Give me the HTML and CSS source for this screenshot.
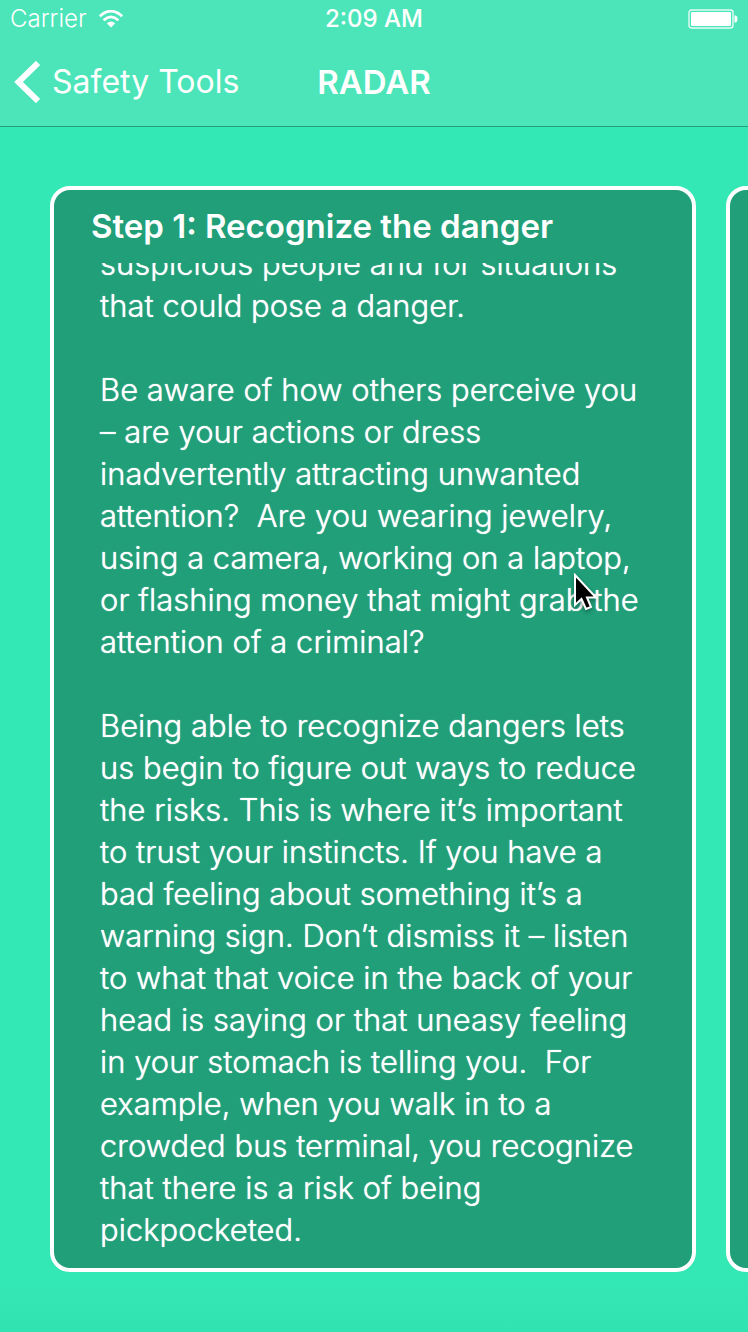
FILE: index.html
```html
<!DOCTYPE html>
<html lang="en">
<head>
<meta charset="utf-8">
<meta name="viewport" content="width=device-width, initial-scale=1">
<title>RADAR</title>
<link rel="stylesheet" href="styles.css">
</head>
<body>
<div class="app">
  <header class="top">
    <div class="status">
      <div class="carrier">
        <span>Carrier</span>
        <svg class="wifi" viewBox="0 0 26 18" aria-hidden="true">
          <path d="M1.8 6.2Q13-4 24.2 6.2" fill="none" stroke="#fff" stroke-width="2.8"/>
          <path d="M5.6 10.2Q13 3.6 20.4 10.2" fill="none" stroke="#fff" stroke-width="2.8"/>
          <path d="M8.8 13.3Q13 9.6 17.2 13.3L13 17.6Z" fill="#fff"/>
        </svg>
      </div>
      <time class="clock">2:09 AM</time>
      <svg class="battery" viewBox="0 0 50 20" aria-label="Battery full">
        <rect x="1" y="1" width="44" height="18" rx="2.5" fill="none" stroke="#fff" stroke-opacity=".85" stroke-width="1.4"/>
        <rect x="3" y="3" width="40" height="14" rx="1" fill="#fff"/>
        <path d="M46.5 6.5h1.5q1.5.5 1.5 3.500t-1.500 3.500h-1.500z" fill="#fff"/>
      </svg>
    </div>
    <nav class="nav">
      <a class="back" href="#">
        <svg class="chevron" viewBox="0 0 26 42" aria-hidden="true">
          <path d="M24 2L4.500 21l19.500 19" fill="none" stroke="#fff" stroke-width="6"/>
        </svg>
        <span>Safety Tools</span>
      </a>
      <h1 class="title">RADAR</h1>
    </nav>
  </header>
  <main class="pager">
    <article class="card">
      <h2 class="step">Step 1: Recognize the danger</h2>
      <div class="scroll">
        <p>suspicious people and for situations
that could pose a danger.</p>
        <p>Be aware of how others perceive you
– are your actions or dress
inadvertently attracting unwanted
attention?  Are you wearing jewelry,
using a camera, working on a laptop,
or flashing money that might grab the
attention of a criminal?</p>
        <p>Being able to recognize dangers lets
us begin to figure out ways to reduce
the risks. This is where it’s important
to trust your instincts. If you have a
bad feeling about something it’s a
warning sign. Don’t dismiss it – listen
to what that voice in the back of your
head is saying or that uneasy feeling
in your stomach is telling you.  For
example, when you walk in to a
crowded bus terminal, you recognize
that there is a risk of being
pickpocketed.</p>
      </div>
    </article>
    <article class="card"></article>
  </main>
  <svg class="pointer" viewBox="0 0 26 40" aria-hidden="true">
    <path d="M2 2V32L8.500 26L13 36L18 34L14 24.500H23Z" fill="#000" stroke="#fff" stroke-width="2"/>
  </svg>
</div>
</body>
</html>
```
FILE: styles.css
```css
* {
  box-sizing: border-box;
}

body {
  margin: 0;
  font-family: Inter, "Liberation Sans", sans-serif;
  color: #fff;
  background: #34e8b6;
}

h1, h2, p {
  margin: 0;
}

.app {
  position: relative;
  display: flex;
  flex-direction: column;
  height: 100vh;
  overflow: hidden;
  background: linear-gradient(to top, #31e3b1, #34e8b6 60px);
}

.top {
  background: #4ce5b9;
  border-bottom: 1px solid #20a17a;
}

.status,
.nav {
  display: grid;
  grid-template-columns: 1fr auto 1fr;
  align-items: center;
}

.status {
  height: 37px;
  padding: 0 10px;
  font-size: 24px;
}

.carrier {
  display: flex;
  align-items: center;
  gap: 11px;
  font-weight: 300;
}

.wifi {
  width: 26px;
  height: 18px;
}

.clock {
  font-weight: 500;
}

.battery {
  justify-self: end;
  width: 50px;
  height: 20px;
}

.nav {
  height: 89px;
  padding: 0 14px;
}

.back {
  display: flex;
  align-items: center;
  gap: 12px;
  color: #fff;
  font-size: 32px;
  font-weight: 400;
  text-decoration: none;
}

.chevron {
  width: 26px;
  height: 42px;
}

.title {
  font-size: 33px;
  font-weight: 600;
}

.pager {
  flex: 1;
  display: flex;
  gap: 30px;
  min-height: 0;
  padding: 59px 0 60px 50px;
}

.card {
  display: flex;
  flex: 0 0 calc(100vw - 102px);
  flex-direction: column;
  min-width: 0;
  padding: 16px 37px 17px;
  background: #209f79;
  border: 4px solid #fff;
  border-radius: 20px;
}

.step {
  padding-bottom: 17px;
  font-size: 33px;
  font-weight: 600;
  line-height: 40px;
}

.scroll {
  display: flex;
  flex: 1;
  flex-direction: column;
  justify-content: flex-end;
  gap: 42px;
  min-height: 0;
  padding-left: 9px;
  overflow: hidden;
  font-size: 31px;
  font-weight: 300;
  line-height: 42px;
  text-shadow: 0 0 1px #fff;
  white-space: pre;
}

.pointer {
  position: absolute;
  top: 573px;
  left: 573px;
  width: 26px;
  height: 40px;
  filter: drop-shadow(0 2px 2px rgba(0, 0, 0, .35));
}
```
